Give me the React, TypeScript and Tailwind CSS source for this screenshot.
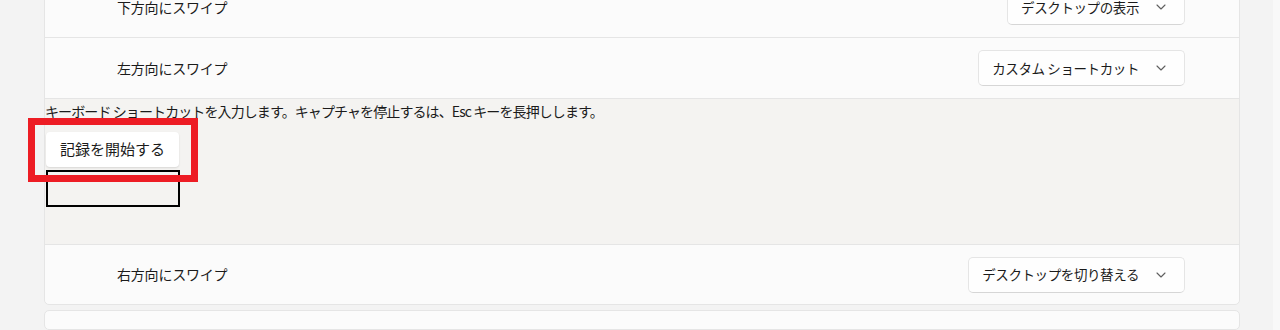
import React from "react";

const font = { fontFamily: '"Noto Sans CJK JP", "Noto Sans", sans-serif' };

function Chevron() {
  return (
    <svg width="10" height="6" viewBox="0 0 10 6" className="shrink-0">
      <path d="M1 1l4 4 4-4" fill="none" stroke="#5f5f5f" strokeWidth="1.1" strokeLinecap="round" strokeLinejoin="round" />
    </svg>
  );
}

function Dropdown({ label }: { label: string }) {
  return (
    <div className="flex h-[36px] items-center gap-[17px] rounded-[5px] border border-[#e5e5e5] border-b-[#d6d6d6] bg-[#fefefe] pl-[13px] pr-[18px] text-[13.5px] tracking-[-0.4px] text-[#1b1b1b]">
      <span>{label}</span>
      <Chevron />
    </div>
  );
}

function Row({ label, value, last }: { label: string; value: string; last?: boolean }) {
  return (
    <div
      className={
        "flex items-center justify-between bg-[#fbfbfb] pl-[72px] pr-[54px] " +
        (last ? "h-[59px] rounded-b-[5px]" : "h-[61px] border-b border-[#e5e5e5]")
      }
    >
      <span className="text-[14px] tracking-[-0.2px] text-[#1b1b1b]">{label}</span>
      <Dropdown label={value} />
    </div>
  );
}

export default function App() {
  return (
    <div className="relative flex h-[330px] w-[1280px] overflow-hidden bg-[#f3f3f3]" style={font}>
      <div className="ml-[44px] flex w-[1196px] flex-col">
        <div className="-mt-[24px] flex flex-col rounded-[5px] border border-[#e5e5e5] bg-[#fbfbfb]">
          <Row label="下方向にスワイプ" value="デスクトップの表示" />
          <Row label="左方向にスワイプ" value="カスタム ショートカット" />
          <div className="flex h-[146px] flex-col items-start border-b border-[#e5e5e5] bg-[#f4f3f1] pt-[2px]">
            <p className="text-[14px] leading-[20px] tracking-[-0.9px] text-[#1b1b1b]">
              キーボード ショートカットを入力します。キャプチャを停止するは、Esc キーを長押しします。
            </p>
            <div className="ml-[1px] mt-[11px] flex h-[35px] w-[133px] items-center justify-center rounded-[4px] bg-white text-[15px] text-[#1b1b1b] shadow-[0_1px_2px_rgba(0,0,0,0.12)]">
              記録を開始する
            </div>
            <div className="ml-[1px] mt-[3px] h-[37px] w-[134px] border-2 border-black" />
          </div>
          <Row label="右方向にスワイプ" value="デスクトップを切り替える" last />
        </div>
        <div className="mt-[5px] h-[40px] rounded-[5px] border border-[#e5e5e5] bg-[#fbfbfb]" />
      </div>
      <div className="ml-auto h-full w-[7px] bg-[#f8f8f8]" />
      <div className="absolute left-[28px] top-[118px] h-[64px] w-[170px] border-[7px] border-[#ed1c24]" />
    </div>
  );
}
